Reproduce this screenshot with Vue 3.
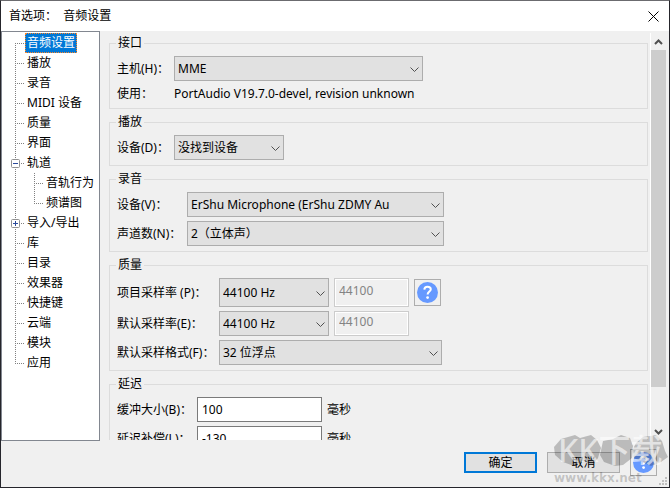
<template>
  <div class="dialog">
    <header class="titlebar">
      <h1>首选项：&nbsp; 音频设置</h1>
      <button type="button" class="close" aria-label="关闭">
        <svg width="11" height="11" viewBox="0 0 11 11">
          <path d="M0.5 0.5L10.5 10.5M10.5 0.5L0.5 10.5" stroke="#000" fill="none" />
        </svg>
      </button>
    </header>

    <div class="body">
      <nav class="tree">
        <ul>
          <li v-for="item in pages" :key="item.name">
            <button v-if="item.children" type="button" class="expander" :aria-label="item.name" @click="item.open = !item.open">
              <svg width="9" height="9" viewBox="0 0 9 9">
                <rect x="0.5" y="0.5" width="8" height="8" rx="1" fill="#fff" stroke="#919191" />
                <path :d="item.open ? 'M2 4.5H7' : 'M2 4.5H7M4.5 2V7'" stroke="#2b4a9b" />
              </svg>
            </button>
            <a href="#" :class="{ selected: current === item.name }" @click.prevent="current = item.name">{{ item.name }}</a>
            <ul v-if="item.children && item.open">
              <li v-for="child in item.children" :key="child">
                <a href="#" :class="{ selected: current === child }" @click.prevent="current = child">{{ child }}</a>
              </li>
            </ul>
          </li>
        </ul>
      </nav>

      <main class="panel">
        <fieldset>
          <legend>接口</legend>
          <div class="row host">
            <label for="host">主机(H)：</label>
            <span class="combo wide">
              <select id="host"><option>MME</option></select>
              <svg class="chevron" viewBox="0 0 9 6"><path d="M0.5 0.5L4.5 4.5L8.5 0.5" /></svg>
            </span>
          </div>
          <div class="row host info">
            <span>使用：</span>
            <span>PortAudio V19.7.0-devel, revision unknown</span>
          </div>
        </fieldset>

        <fieldset>
          <legend>播放</legend>
          <div class="row host">
            <label for="playback">设备(D)：</label>
            <span class="combo small">
              <select id="playback"><option>没找到设备</option></select>
              <svg class="chevron" viewBox="0 0 9 6"><path d="M0.5 0.5L4.5 4.5L8.5 0.5" /></svg>
            </span>
          </div>
        </fieldset>

        <fieldset>
          <legend>录音</legend>
          <div class="row record">
            <label for="record">设备(V)：</label>
            <span class="combo wider">
              <select id="record"><option>ErShu Microphone (ErShu ZDMY Au</option></select>
              <svg class="chevron" viewBox="0 0 9 6"><path d="M0.5 0.5L4.5 4.5L8.5 0.5" /></svg>
            </span>
          </div>
          <div class="row record">
            <label for="channels">声道数(N)：</label>
            <span class="combo wider">
              <select id="channels"><option>2（立体声）</option></select>
              <svg class="chevron" viewBox="0 0 9 6"><path d="M0.5 0.5L4.5 4.5L8.5 0.5" /></svg>
            </span>
          </div>
        </fieldset>

        <fieldset>
          <legend>质量</legend>
          <div class="row quality tall">
            <label for="project-rate">项目采样率 (P)：</label>
            <span class="combo small">
              <select id="project-rate"><option>44100 Hz</option></select>
              <svg class="chevron" viewBox="0 0 9 6"><path d="M0.5 0.5L4.5 4.5L8.5 0.5" /></svg>
            </span>
            <input type="text" class="rate" value="44100" aria-label="项目采样率" disabled />
            <button type="button" class="help" aria-label="帮助">
              <svg width="21" height="21" viewBox="0 0 21 21">
                <circle cx="10.5" cy="10.5" r="10.5" fill="#6699ff" />
                <path d="M7.3 7.6C7.4 5.6 8.8 4.7 10.5 4.7C12.5 4.7 13.8 5.7 13.8 7.3C13.8 9.6 10.6 9.6 10.6 12.6" fill="none" stroke="#fff" stroke-width="2" />
                <circle cx="10.6" cy="15.6" r="1.4" fill="#fff" />
              </svg>
            </button>
          </div>
          <div class="row quality">
            <label for="default-rate">默认采样率(E)：</label>
            <span class="combo small">
              <select id="default-rate"><option>44100 Hz</option></select>
              <svg class="chevron" viewBox="0 0 9 6"><path d="M0.5 0.5L4.5 4.5L8.5 0.5" /></svg>
            </span>
            <input type="text" class="rate" value="44100" aria-label="默认采样率" disabled />
          </div>
          <div class="row quality">
            <label for="format">默认采样格式(F)：</label>
            <span class="combo medium">
              <select id="format"><option>32 位浮点</option></select>
              <svg class="chevron" viewBox="0 0 9 6"><path d="M0.5 0.5L4.5 4.5L8.5 0.5" /></svg>
            </span>
          </div>
        </fieldset>

        <fieldset>
          <legend>延迟</legend>
          <div class="row latency">
            <label for="buffer">缓冲大小(B)：</label>
            <input id="buffer" v-model="buffer" type="text" />
            <span>毫秒</span>
          </div>
          <div class="row latency">
            <label for="compensation">延迟补偿(L)：</label>
            <input id="compensation" v-model="compensation" type="text" />
            <span>毫秒</span>
          </div>
        </fieldset>
      </main>

      <div class="scrollbar">
        <svg width="9" height="6" viewBox="0 0 9 6"><path d="M1 5L4.5 1.5L8 5" /></svg>
        <div class="track"><div class="thumb"></div></div>
        <svg width="9" height="6" viewBox="0 0 9 6"><path d="M1 1L4.5 4.5L8 1" /></svg>
      </div>
    </div>

    <footer class="footer">
      <button type="button" class="push primary">确定</button>
      <button type="button" class="push">取消</button>
      <button type="button" class="help" aria-label="帮助">
        <svg width="21" height="21" viewBox="0 0 21 21">
          <circle cx="10.5" cy="10.5" r="10.5" fill="#6699ff" />
          <path d="M7.3 7.6C7.4 5.6 8.8 4.7 10.5 4.7C12.5 4.7 13.8 5.7 13.8 7.3C13.8 9.6 10.6 9.6 10.6 12.6" fill="none" stroke="#fff" stroke-width="2" />
          <circle cx="10.6" cy="15.6" r="1.4" fill="#fff" />
        </svg>
      </button>
      <svg class="grip" width="8" height="8" viewBox="0 0 8 8">
        <path d="M6 0h2v2h-2zM3 3h2v2h-2zM6 3h2v2h-2zM0 6h2v2h-2zM3 6h2v2h-2zM6 6h2v2h-2z" fill="#bfbfbf" />
      </svg>
    </footer>

    <svg class="watermark" width="116" height="54" viewBox="0 0 116 54">
      <g fill="#000" fill-opacity="0.22">
        <path d="M8 6L22 2L27 5L38 2L44 7L48 15L45 25L40 32L29 28L21 33L10 29L2 22L1 14Z" />
        <path d="M50 8L60 6L68 2L77 5L80 13L79 25L70 32L62 33L51 29L47 22Z" />
        <path d="M83 10L90 4L103 2L109 8L112 18L115 24L108 29L98 33L89 29L81 25L80 16Z" />
      </g>
      <text x="5" y="29" class="brand">KK下载</text>
      <text x="1" y="49" class="site">www.kkx.net</text>
    </svg>
  </div>
</template>

<script setup>
import { ref } from 'vue';

const current = ref('音频设置');
const buffer = ref('100');
const compensation = ref('-130');

const pages = ref([
  { name: '音频设置' },
  { name: '播放' },
  { name: '录音' },
  { name: 'MIDI 设备' },
  { name: '质量' },
  { name: '界面' },
  { name: '轨道', open: true, children: ['音轨行为', '频谱图'] },
  { name: '导入/导出', open: false, children: ['导入', '导出'] },
  { name: '库' },
  { name: '目录' },
  { name: '效果器' },
  { name: '快捷键' },
  { name: '云端' },
  { name: '模块' },
  { name: '应用' }
]);
</script>

<style>
body {
  margin: 0;
}
</style>

<style scoped>
.dialog {
  position: relative;
  display: flex;
  flex-direction: column;
  height: 100vh;
  box-sizing: border-box;
  border: 1px solid #25252b;
  border-top-color: #6b6b6f;
  background: #f0f0f0;
  color: #000;
  font: 12px/16px "Noto Sans", "Noto Sans CJK SC", sans-serif;
}

button,
input,
select {
  box-sizing: border-box;
  margin: 0;
  font: inherit;
  color: inherit;
}

.titlebar {
  display: flex;
  align-items: center;
  justify-content: space-between;
  height: 30px;
  padding: 0 10px 0 8px;
  background: #fff;
}

h1 {
  margin: 0;
  font-size: 12px;
  font-weight: 400;
}

.close {
  display: flex;
  padding: 0;
  border: none;
  background: none;
}

.body {
  display: flex;
  flex: 1;
  min-height: 0;
}

/* page tree */
.tree {
  flex: none;
  width: 99px;
  box-sizing: border-box;
  padding: 1px 0 0 13px;
  border: 1px solid #828790;
  background: #fff;
}

ul {
  margin: 0;
  padding: 0;
  list-style: none;
}

li {
  position: relative;
  padding-left: 10px;
}

li::before {
  content: "";
  position: absolute;
  top: 0;
  bottom: 0;
  left: 0;
  width: 1px;
  background: repeating-linear-gradient(#808080 0 1px, transparent 1px 2px);
}

.tree > ul > li:first-child::before {
  top: 10px;
}

li:last-child::before {
  bottom: auto;
  height: 11px;
}

li::after {
  content: "";
  position: absolute;
  top: 10px;
  left: 0;
  width: 9px;
  height: 1px;
  background: repeating-linear-gradient(90deg, #808080 0 1px, transparent 1px 2px);
}

li ul {
  padding-left: 9px;
}

.tree a {
  display: block;
  width: max-content;
  height: 20px;
  box-sizing: border-box;
  padding: 0 1px;
  border: 1px solid transparent;
  color: #000;
  line-height: 18px;
  white-space: nowrap;
  text-decoration: none;
}

.tree a.selected {
  border: 1px dotted #ff8728;
  background: #0078d7;
  color: #fff;
}

.expander {
  position: absolute;
  z-index: 1;
  top: 6px;
  left: -4px;
  display: flex;
  padding: 0;
  border: none;
  background: none;
}

/* settings panel */
.panel {
  flex: 1;
  min-width: 0;
  margin-bottom: 1px;
  padding: 4px 2px 0 9px;
  overflow: hidden;
}

fieldset {
  display: flex;
  flex-direction: column;
  gap: 4px;
  min-width: 0;
  margin: 0 0 5px;
  padding: 5px 7px;
  border: 1px solid #dcdcdc;
}

legend {
  height: 16px;
  padding: 0 2px;
  margin-left: -1px;
}

.row {
  display: flex;
  align-items: center;
  gap: 5px;
  min-height: 25px;
  white-space: nowrap;
}

.info {
  min-height: 18px;
}

.row > :first-child {
  flex: none;
  margin-right: -5px;
}

.host > :first-child {
  width: 57px;
}

.record > :first-child {
  width: 70px;
}

.quality > :first-child {
  width: 102px;
}

.latency > :first-child {
  width: 80px;
}

.combo {
  position: relative;
  display: flex;
  height: 25px;
}

.tall .combo,
.tall .rate {
  height: 29px;
}

.small {
  width: 110px;
}

.medium {
  width: 223px;
}

.wide {
  width: 249px;
}

.wider {
  width: 257px;
}

select {
  width: 100%;
  padding: 0 20px 0 3px;
  border: 1px solid #adadad;
  border-radius: 0;
  background: #e1e1e1;
  appearance: none;
}

.chevron {
  position: absolute;
  top: 50%;
  right: 4px;
  width: 9px;
  height: 6px;
  margin-top: -2px;
  fill: none;
  stroke: #505050;
  pointer-events: none;
}

input {
  width: 125px;
  height: 25px;
  padding: 0 4px;
  border: 1px solid #7a7a7a;
  background: #fff;
}

input.rate {
  width: 75px;
  padding-bottom: 4px;
  border-color: #ccc;
  background: #f0f0f0;
  box-shadow: inset 0 0 0 1px #fff;
  color: #838383;
}

.help {
  display: flex;
  align-items: center;
  justify-content: center;
  width: 27px;
  height: 27px;
  padding: 0;
  border: 1px solid #adadad;
  background: #f0f0f0;
}

.scrollbar {
  display: flex;
  flex-direction: column;
  align-items: center;
  justify-content: space-between;
  gap: 5px;
  width: 15px;
  margin: 2px 3px 0 0;
  padding: 6px 0;
  border-left: 1px solid #fff;
  box-sizing: content-box;
}

.scrollbar svg {
  flex: none;
  fill: none;
  stroke: #505050;
  stroke-width: 2;
}

.track {
  flex: 1;
  width: 100%;
}

.thumb {
  height: 90%;
  background: #cdcdcd;
}

/* bottom buttons */
.footer {
  display: flex;
  align-items: center;
  justify-content: flex-end;
  gap: 10px;
  height: 46px;
  box-sizing: border-box;
  padding: 0 12px 3px 0;
}

.push {
  width: 73px;
  height: 21px;
  padding: 0;
  border: 1px solid #adadad;
  background: #e1e1e1;
  line-height: 16px;
}

.primary {
  border: 2px solid #0078d7;
}

.grip {
  position: absolute;
  right: 2px;
  bottom: 2px;
}

.watermark {
  position: absolute;
  right: 0;
  bottom: 0;
  pointer-events: none;
}

.brand {
  fill: #fff;
  fill-opacity: 0.6;
  font: 500 32px "Noto Sans", "Noto Sans CJK SC", sans-serif;
}

.site {
  fill: #000;
  fill-opacity: 0.2;
  font: bold 12px "DejaVu Sans", sans-serif;
}
</style>
